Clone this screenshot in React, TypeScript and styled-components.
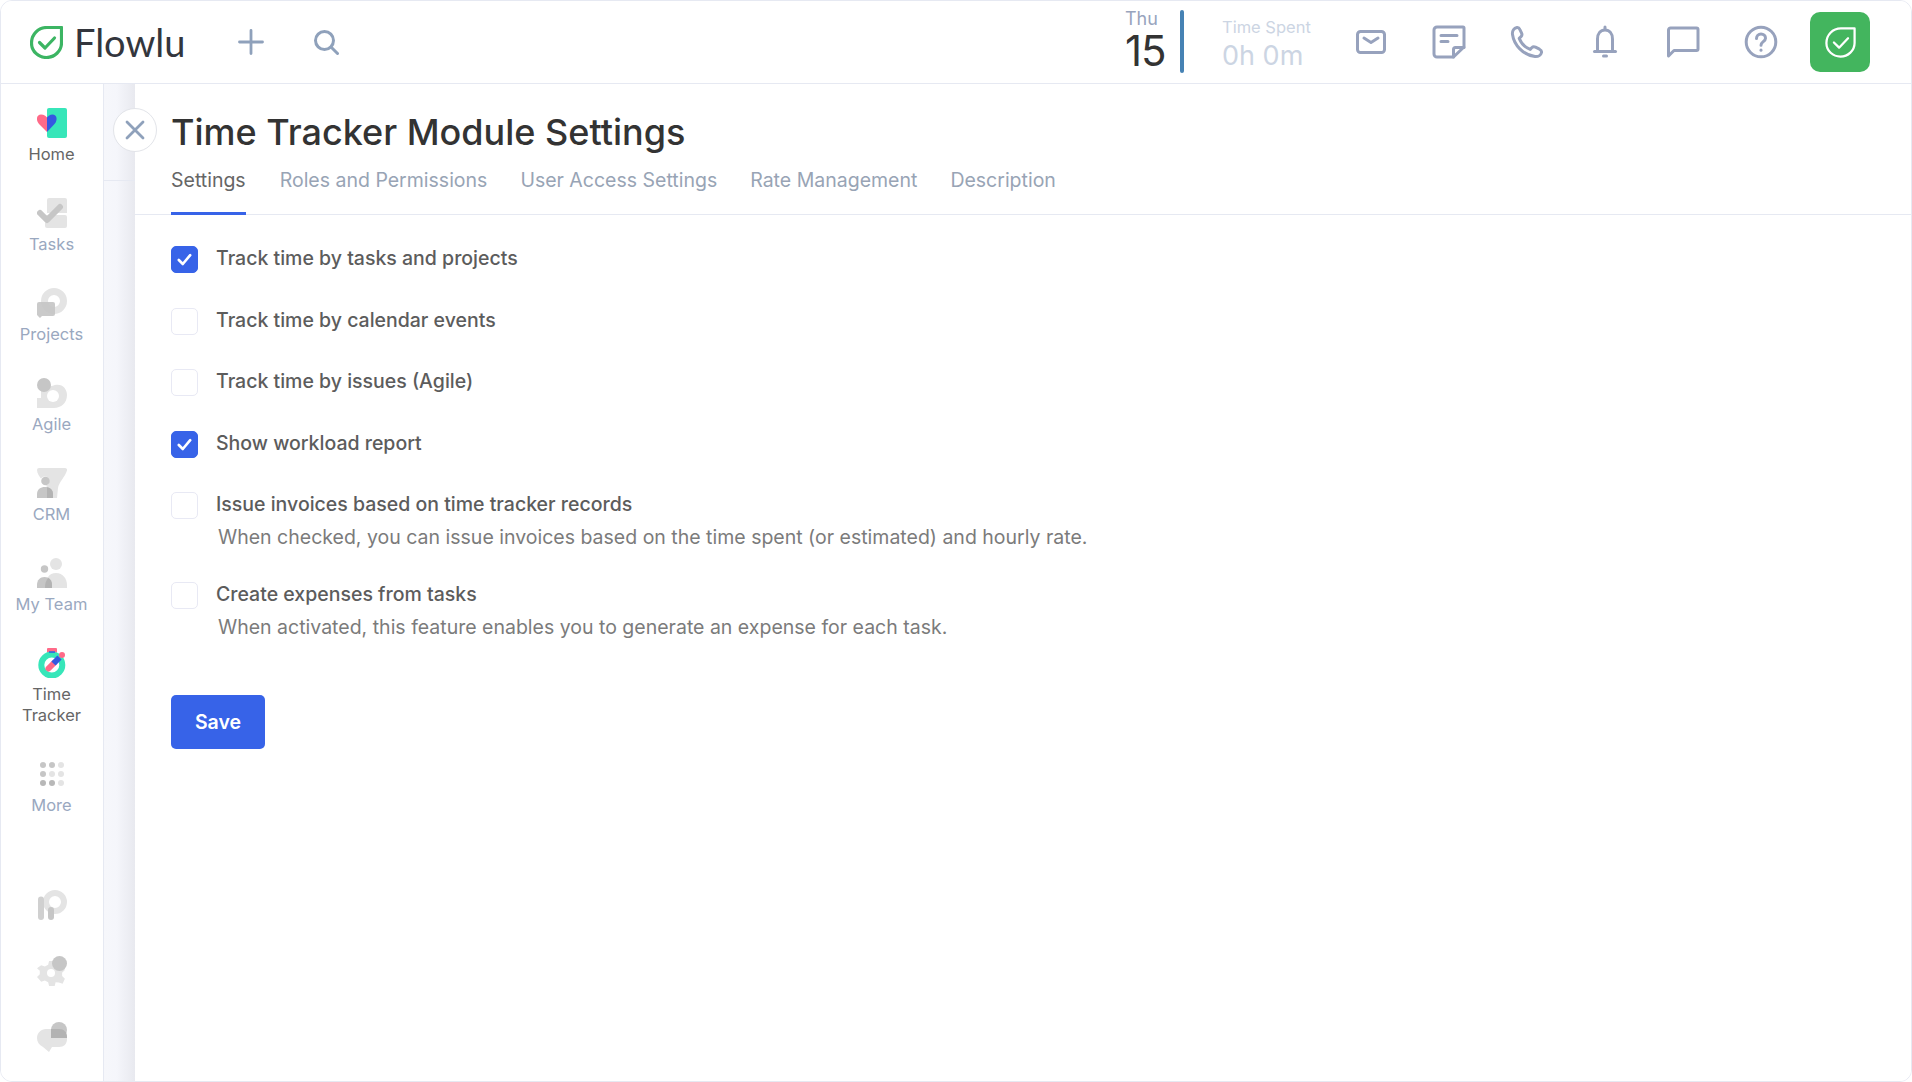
import React from "react";
import styled, { createGlobalStyle } from "styled-components";

const Global = createGlobalStyle`
  html, body { margin: 0; padding: 0; height: 100%; background: #fff; }
  body { font-family: Inter, "Liberation Sans", sans-serif; }
  #root { height: 100%; }
  * { box-sizing: border-box; }
`;

const Frame = styled.div`
  position: relative; width: 1912px; height: 1082px; display: flex; flex-direction: column;
  border: 1px solid #e6e9f2; border-radius: 12px; overflow: hidden; background: #fff;
`;
const Header = styled.header`
  height: 83px; flex: none; display: flex; align-items: center; border-bottom: 1px solid #e6e9f2; background: #fff;
`;
const Logo = styled.div`display: flex; align-items: center; margin-left: 29px; width: 157px; gap: 11px;`;
const LogoText = styled.span`
  font-family: Lato, sans-serif; font-size: 38px; line-height: 1; color: #33363d; font-weight: 400;
`;
const ToolIcon = styled.span<{ $ml: number }>`display: flex; margin-left: ${p => p.$ml}px;`;
const Spacer = styled.div`flex: 1;`;
const DateBox = styled.div`
  display: flex; flex-direction: column; width: 55px; margin-top: -2px;
`;
const Day = styled.span`font-size: 18px; line-height: 20px; margin-top: -1px; color: #98a4bd;`;
const DayNum = styled.span`font-size: 42px; line-height: 42px; margin-top: 1px; color: #333; font-weight: 400; letter-spacing: -1px;`;
const Divider = styled.div`width: 4px; height: 63px; border-radius: 2px; background: #4682b4; margin-top: -2px;`;
const Spent = styled.div`display: flex; flex-direction: column; width: 110px; margin-left: 38px; margin-top: 7px;`;
const SpentLabel = styled.span`font-size: 16.5px; line-height: 20px; color: #ccd5e3;`;
const SpentValue = styled.span`font-size: 27px; line-height: 36px; margin-top: 1px; color: #ccd5e3;`;
const HeadActions = styled.div`display: flex; align-items: center;`;
const ActionSlot = styled.span`width: 78px; display: flex; justify-content: center;`;
const GreenButton = styled.div`
  width: 60px; height: 60px; margin: 0 41px 0 10px; border-radius: 10px; background: #43b55e;
  display: flex; align-items: center; justify-content: center;
`;

const Body = styled.div`flex: 1; display: flex; min-height: 0;`;
const Sidebar = styled.nav`
  width: 103px; flex: none; display: flex; flex-direction: column; align-items: center; border-right: 1px solid #e6e9f2; padding: 24px 1px 0 0; background: #fff;
`;
const NavItem = styled.div<{ $tall?: boolean }>`
  display: flex; flex-direction: column; align-items: center; height: ${p => (p.$tall ? 111 : 90)}px; width: 100%;
`;
const NavIcon = styled.svg`width: 30px; height: 30px; display: block; flex: none;`;
const NavLabel = styled.span<{ $active?: boolean }>`
  font-size: 16.5px; line-height: 21px; margin-top: 6px; text-align: center; color: ${p => (p.$active ? "#666" : "#9aa8bf")};
`;
const NavBottom = styled.div`margin-top: auto; display: flex; flex-direction: column; gap: 36px; padding-bottom: 29px;`;
const Gutter = styled.div`
  width: 31px; flex: none; background: linear-gradient(90deg, #f6f7fb 0%, #f5f6fb 40%, #e8e9ef 100%); padding-top: 96px;
`;
const GutterRule = styled.div`height: 1px; background: #e6e9f2;`;
const Panel = styled.main`flex: 1; display: flex; flex-direction: column; background: #fff; min-width: 0;`;
const CloseButton = styled.div`
  position: absolute; left: 112px; top: 107px; width: 44px; height: 44px; border-radius: 50%;
  background: #fff; border: 1px solid #e2e4e9; display: flex; align-items: center; justify-content: center;
`;
const PanelHead = styled.div`padding: 24px 0 0 36px; border-bottom: 1px solid #e6e9f2;`;
const Title = styled.h1`margin: 0; font-size: 36px; line-height: 48px; font-weight: 500; color: #333;`;
const Tabs = styled.div`display: flex; gap: 33px; margin-top: 11px;`;
const Tab = styled.div<{ $active?: boolean }>`
  font-size: 19.5px; line-height: 26px; padding-bottom: 19px; margin-bottom: -1px;
  margin-right: ${p => (p.$active ? 1 : 0)}px;
  color: ${p => (p.$active ? "#666" : "#98a4b5")};
  border-bottom: 3px solid ${p => (p.$active ? "#3763e8" : "transparent")};
`;
const Form = styled.div`padding: 31px 0 0 36px; display: flex; flex-direction: column;`;
const Option = styled.div<{ $tall?: boolean }>`
  display: grid; grid-template-columns: 27px 1fr; column-gap: 18px; align-items: start; height: ${p => (p.$tall ? 90 : 61.5)}px;
`;
const Box = styled.div<{ $on?: boolean }>`
  width: 27px; height: 27px; border-radius: 5px; display: flex; align-items: center; justify-content: center;
  background: ${p => (p.$on ? "#3763e8" : "#fff")}; border: 1px solid ${p => (p.$on ? "#3763e8" : "#e8e9f4")};
`;
const Texts = styled.div`display: flex; flex-direction: column; margin-top: -2px;`;
const OptionLabel = styled.span`font-size: 19.5px; line-height: 28px; font-weight: 500; color: #5c5c5c;`;
const OptionHelp = styled.span`font-size: 19.5px; line-height: 28px; margin: 5px 0 0 2px; color: #7b7b7b;`;
const SaveButton = styled.button`
  margin-top: 23px; width: 94px; height: 54px; border: 0; border-radius: 5px; background: #3763e8; color: #fff;
  font: 600 19.5px/1 Inter, sans-serif; padding: 2px 0 0;
`;

const Leaf = ({ stroke, size, sw = 3 }: { stroke: string; size: number; sw?: number }) => (
  <svg width={size} height={size} viewBox="0 0 33 33" fill="none">
    <path d="M31.5 1.5H17C8 1.5 1.5 8.5 1.5 17S8.5 31.5 16.5 31.5 31.5 25 31.5 17Z" stroke={stroke} strokeWidth={sw} strokeLinejoin="round" />
    <path d="M9.5 16.5l5.5 5.5 9.5-10" stroke={stroke} strokeWidth={sw} strokeLinecap="round" strokeLinejoin="round" />
  </svg>
);

const HeadIcon = ({ children }: { children: React.ReactNode }) => (
  <svg width="34" height="34" viewBox="0 0 34 34" fill="none" stroke="#97a2bd" strokeWidth="3" strokeLinecap="round" strokeLinejoin="round">{children}</svg>
);

const Check = () => (
  <svg width="15" height="13" viewBox="0 0 15 13" fill="none">
    <path d="M1.8 7l4 4L13.2 2.2" stroke="#fff" strokeWidth="2.6" strokeLinecap="round" strokeLinejoin="round" />
  </svg>
);

const L = "#e4e4e4";
const D = "#c6c6c6";

const icons: Record<string, React.ReactNode> = {
  Home: (<>
    <rect x="10" width="20" height="30" rx="2" fill="#37e6b9" />
    <path d="M10 24L2 16C-1.5 12-.5 6.5 4 6.5c3 0 5 1.5 6 3Z" fill="#ff6a88" />
    <path d="M10 24V9.5C11 8 13 6.5 15.500 6.500c4.500 0 5.500 5.500 2 9.500Z" fill="#3558e0" />
  </>),
  Tasks: (<>
    <path d="M10 2a2 2 0 0 1 2-2h16a2 2 0 0 1 2 2v13H10Z" fill={L} />
    <path d="M8 17h20a2 2 0 0 1 2 2v9a2 2 0 0 1-2 2H10a2 2 0 0 1-2-2Z" fill={L} />
    <path d="M3 15l7 7L23 9" stroke={D} strokeWidth="6" strokeLinecap="round" strokeLinejoin="round" fill="none" />
  </>),
  Projects: (<>
    <circle cx="17" cy="13" r="9.500" fill="none" stroke={L} strokeWidth="7" />
    <path d="M2 14h14a2 2 0 0 1 2 2v10a2 2 0 0 1-2 2H5l-2 2-3-3V16a2 2 0 0 1 2-2Z" fill="#c4c4c4" fillOpacity=".9" />
  </>),
  Agile: (<>
    <path d="M0 30V20h4V8H15C24 4 30 10 30 17c0 8-6 13-13 13Z" fill={L} />
    <circle cx="16" cy="18" r="6" fill="#fff" />
    <circle cx="7" cy="7" r="7" fill={D} />
  </>),
  CRM: (<>
    <path d="M2 0H28a2 2 0 0 1 2 2.500C28 9 22 14 21 20L20 30H10V20C10 15 0 9 0 2A2 2 0 0 1 2 0Z" fill={L} />
    <circle cx="8" cy="13" r="4.500" fill="#fff" />
    <circle cx="8.500" cy="13" r="4.300" fill={D} />
    <path d="M0 30v-4c0-4.500 3.500-7 8-7s8 2.500 8 7v4Z" fill={D} />
    <path d="M10 19.200c3.700.7 6 3 6 6.800v4h-6Z" fill="#b3b3b3" />
  </>),
  "My Team": (<>
    <circle cx="19" cy="6" r="6" fill={L} />
    <circle cx="7.500" cy="11" r="3.700" fill={D} />
    <path d="M8 30c0-9 4-15 11-15s11 6 11 12v3Z" fill={L} />
    <path d="M0 30v-3c0-5 3-8 7.500-8s7.500 3 7.500 8v3Z" fill={D} />
    <path d="M8 30c0-5 1-8 3.500-10 2.300 1.500 3.500 4 3.500 7v3Z" fill="#b3b3b3" />
  </>),
  Time: (<>
    <rect x="10" y="0" width="10" height="5" rx="1" fill="#ff6a88" />
    <circle cx="14.800" cy="17" r="10.500" fill="none" stroke="#37e6b9" strokeWidth="6" />
    <path d="M12 3.300h6v1.500h-6Z" fill="#3558e0" />
    <path d="M11.500 20.500l5-5" stroke="#ff6a88" strokeWidth="6" strokeLinecap="round" />
    <path d="M16.500 15.500l6-6" stroke="#3558e0" strokeWidth="6" />
    <circle cx="25" cy="7" r="3" fill="#ff6a88" />
  </>),
  More: (<>
    {[[6,D],[15,D],[24,L],[6,D],[15,L],[24,L],[6,"#b8b8b8"],[15,"#b8b8b8"],[24,L]].map(([x, f], i) => (
      <circle key={i} cx={x as number} cy={6 + Math.floor(i / 3) * 9} r="3" fill={f as string} />
    ))}
  </>),
  P: (<>
    <circle cx="18" cy="12" r="9" fill="none" stroke={L} strokeWidth="6" />
    <rect x="1" y="6.500" width="6" height="23.500" rx="3" fill="#d0d0d0" />
    <rect x="11" y="17" width="6" height="13" rx="3" fill="#c6c6c6" />
  </>),
  Gear: (<>
    <path d="M13 4h6l1 4 3.500 1.800 4-1.300 2.500 5-3 2.800v3.400l3 2.800-2.500 5-4-1.300L20 26l-1 4h-6l-1-4-3.500-1.800-4 1.300L0 20.500l3-2.800v-3.400L0 11.500l4.500-3 4 1.300L12 8Z" transform="translate(0 1) scale(.93 .97)" fill={L} />
    <circle cx="14" cy="17" r="4" fill="#fff" />
    <circle cx="22.500" cy="7.500" r="7.500" fill={D} />
  </>),
  Chat: (<>
    <path d="M9 7H22c5 0 8 3 8 8v2c0 5-3 8-8 8H15l-3 5-6-5C2 23 0 20 0 16c0-5 4-9 9-9Z" fill={L} />
    <circle cx="22" cy="8" r="8" fill={D} />
    <path d="M14 7h8c5 0 8 3 8 8v1H14Z" fill="#b3b3b3" />
  </>),
};

const nav = [
  { k: "Home", label: "Home", active: true },
  { k: "Tasks", label: "Tasks" },
  { k: "Projects", label: "Projects" },
  { k: "Agile", label: "Agile" },
  { k: "CRM", label: "CRM" },
  { k: "My Team", label: "My Team" },
  { k: "Time", label: "Time Tracker", active: true, wrap: true },
  { k: "More", label: "More" },
];

const options = [
  { on: true, label: "Track time by tasks and projects" },
  { label: "Track time by calendar events" },
  { label: "Track time by issues (Agile)" },
  { on: true, label: "Show workload report" },
  { label: "Issue invoices based on time tracker records", help: "When checked, you can issue invoices based on the time spent (or estimated) and hourly rate." },
  { label: "Create expenses from tasks", help: "When activated, this feature enables you to generate an expense for each task." },
];

const tabs = ["Settings", "Roles and Permissions", "User Access Settings", "Rate Management", "Description"];

export default function App() {
  return (
    <>
      <Global />
      <Frame>
        <Header>
          <Logo>
            <Leaf stroke="#3cb563" size={33} sw={3.2} />
            <LogoText>Flowlu</LogoText>
          </Logo>
          <ToolIcon $ml={51}>
            <svg width="26" height="26" viewBox="0 0 26 26" fill="none" stroke="#8fa1bb" strokeWidth="2.800" strokeLinecap="round"><path d="M13 1.500v23M1.500 13h23" /></svg>
          </ToolIcon>
          <ToolIcon $ml={49}>
            <svg width="26" height="26" viewBox="0 0 26 26" fill="none" stroke="#8fa1bb" strokeWidth="3" strokeLinecap="round"><circle cx="11.500" cy="11.500" r="9" /><path d="M18.500 18.500l6 6" /></svg>
          </ToolIcon>
          <Spacer />
          <DateBox>
            <Day>Thu</Day>
            <DayNum>15</DayNum>
          </DateBox>
          <Divider />
          <Spent>
            <SpentLabel>Time Spent</SpentLabel>
            <SpentValue>0h 0m</SpentValue>
          </Spent>
          <HeadActions>
            <ActionSlot><HeadIcon><rect x="3.500" y="6.500" width="27" height="21" rx="3" /><path d="M10 13l7 4.500L24 13" /></HeadIcon></ActionSlot>
            <ActionSlot><HeadIcon><path d="M21.500 32H5a3 3 0 0 1-3-3V5a3 3 0 0 1 3-3h26a1 1 0 0 1 1 1v19Z" /><path d="M21.500 32V24.500a2 2 0 0 1 2-2H32M9 10.500h16M9 16.500h7" /></HeadIcon></ActionSlot>
            <ActionSlot><HeadIcon><path d="M7 2.500c-3 .7-5 3.500-4.500 7C4 20 13 30 25 31.500c3.500.3 6-1.500 6.500-4 .3-1.500-.5-2.500-2-3.300l-4-2c-1.500-.7-2.700-.5-3.800.6l-1.500 1.600c-5-2-9-6-11-11l1.800-1.700c1-1 1.200-2.200.6-3.500L9.800 4.400C9.200 3 8.300 2.300 7 2.500Z" /></HeadIcon></ActionSlot>
            <ActionSlot><HeadIcon><path d="M9.500 25V14c0-5.500 3-9 7.500-9s7.500 3.500 7.500 9v11" /><path d="M6.500 26.500h21" /><path d="M17 2v2" /><path d="M15.500 31h3" /></HeadIcon></ActionSlot>
            <ActionSlot><HeadIcon><path d="M2.500 31V5a2 2 0 0 1 2-2h26a1.500 1.500 0 0 1 1.500 1.500V24a1.500 1.500 0 0 1-1.500 1.500H8Z" /></HeadIcon></ActionSlot>
            <ActionSlot><HeadIcon><circle cx="17" cy="17" r="14.800" /><path d="M12.500 13.500c0-2.500 2-4.500 4.500-4.500s4.500 1.800 4.500 4.200c0 3.300-4.500 3.600-4.500 7" /><path d="M17 25v.2" /></HeadIcon></ActionSlot>
          </HeadActions>
          <GreenButton><Leaf stroke="#fff" size={31} sw={2.4} /></GreenButton>
        </Header>
        <Body>
          <Sidebar>
            {nav.map(n => (
              <NavItem key={n.k} $tall={n.wrap}>
                <NavIcon viewBox="0 0 30 30">{icons[n.k]}</NavIcon>
                <NavLabel $active={n.active}>
                  {n.wrap ? <>Time<br />Tracker</> : n.label}
                </NavLabel>
              </NavItem>
            ))}
            <NavBottom>
              <NavIcon viewBox="0 0 30 30">{icons.P}</NavIcon>
              <NavIcon viewBox="0 0 30 30">{icons.Gear}</NavIcon>
              <NavIcon viewBox="0 0 30 30">{icons.Chat}</NavIcon>
            </NavBottom>
          </Sidebar>
          <Gutter><GutterRule /></Gutter>
          <Panel>
            <PanelHead>
              <Title>Time Tracker Module Settings</Title>
              <Tabs>
                {tabs.map((t, i) => <Tab key={t} $active={i === 0}>{t}</Tab>)}
              </Tabs>
            </PanelHead>
            <Form>
              {options.map(o => (
                <Option key={o.label} $tall={!!o.help}>
                  <Box $on={o.on}>{o.on && <Check />}</Box>
                  <Texts>
                    <OptionLabel>{o.label}</OptionLabel>
                    {o.help && <OptionHelp>{o.help}</OptionHelp>}
                  </Texts>
                </Option>
              ))}
              <div><SaveButton>Save</SaveButton></div>
            </Form>
          </Panel>
        </Body>
        <CloseButton>
          <svg width="20" height="20" viewBox="0 0 20 20" fill="none" stroke="#8fa1bb" strokeWidth="2.800" strokeLinecap="round"><path d="M2 2l16 16M18 2L2 18" /></svg>
        </CloseButton>
      </Frame>
    </>
  );
}
